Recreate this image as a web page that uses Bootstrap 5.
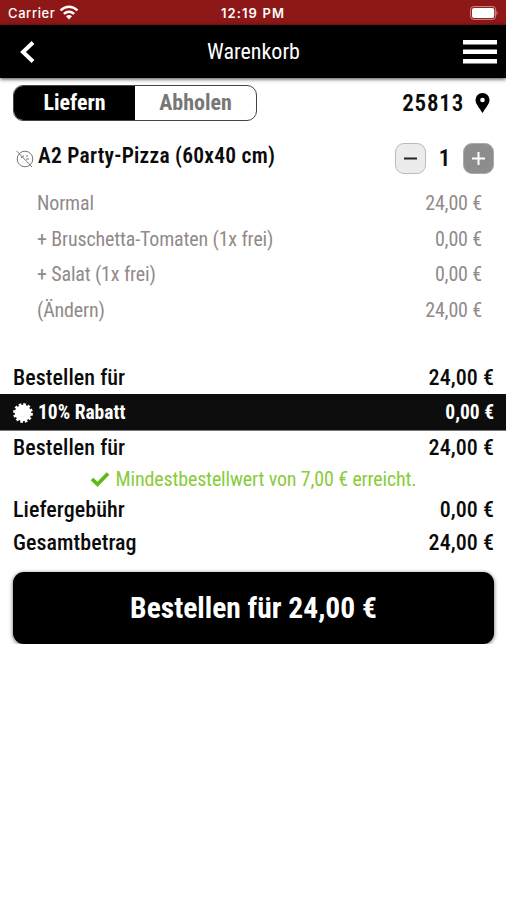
<!DOCTYPE html>
<html lang="de">
<head>
<meta charset="utf-8">
<meta name="viewport" content="width=device-width, initial-scale=1">
<title>Warenkorb</title>
<link href="https://cdn.jsdelivr.net/npm/bootstrap@5.3.0/dist/css/bootstrap.min.css" rel="stylesheet">
<style>
body{font-family:"Roboto Condensed",Roboto,sans-serif;font-stretch:75%;color:#0b0b0b;line-height:1}
svg{display:block;flex:none}
.status{height:25px;background:#8e1818;font:500 13px Inter,sans-serif;letter-spacing:.6px}
.status>*{flex:1}
.clock{font-weight:600;letter-spacing:1.1px}
.topbar{height:53px;box-shadow:0 1px 4px rgba(0,0,0,.75);font-size:22px;padding:0 9px 0 20px}
.page-title{position:relative;left:-4px}
.choice{padding:7px 15px 0 13px}
.modes{width:244px;height:36px;border:1px solid #444;border-radius:10px;font-size:22px;font-weight:700}
.pickup{color:#777}
.place{font-size:23px;font-weight:600;letter-spacing:.8px;gap:10px}
.product{height:75px;padding:0 12px 0 15px}
.dish{font-size:21.5px;font-weight:600;letter-spacing:.25px;gap:4px}
.dish span{margin-bottom:5px}
.count{width:37px;font-size:23px;font-weight:600}
.step{width:31px;height:31px;border-radius:9px;border:1px solid #bbb;background:#ececec}
.step.more{background:#8d8d8d;border-color:#aaa}
.extras{font-size:20px;font-weight:400;color:#918a8a;letter-spacing:-.15px;padding:0 24px 0 37px;margin-top:-3px;height:168px}
.extras>div{height:35.5px}
.sum{font-size:22px;font-weight:500;letter-spacing:.06px;padding:0 12px 0 13px;height:33px}
.promo{height:37px;background:#0d0d0d;border-bottom:1px solid #777;font-size:19.5px;font-weight:700;padding:1px 12px 0 13px}
.reached{height:29px;font-size:20px;font-weight:400;color:#8acb3c;letter-spacing:-.15px;gap:6px}
.order{height:72px;margin:13px 12px 0 13px;padding-top:1px;border-radius:11px;font-size:29.5px;font-weight:700;box-shadow:0 1px 4px rgba(0,0,0,.6)}
</style>
</head>
<body class="bg-white">
<div class="status d-flex align-items-center text-white px-2">
<div class="d-flex align-items-center gap-1"><span>Carrier</span><svg width="20" height="15" viewBox="0 0 20 15" fill="none" stroke="#fff" stroke-width="2.4"><path d="M1.500 5.300Q10-2 18.500 5.300M4.800 8.800q5.200-4.300 10.400 0"/><path d="M10 14.500l-3-3.300q3-2.200 6 0z" fill="#fff" stroke="none"/></svg></div>
<div class="clock text-center">12:19 PM</div>
<div class="d-flex justify-content-end"><svg width="30" height="14" viewBox="0 0 30 14"><rect x="2.600" y=".6" width="25" height="12.800" rx="3" fill="none" stroke="#d08d8d"/><rect x="4" y="2" width="22.200" height="10" rx="2" fill="#fff"/><path d="M28.500 4.500q2 2.500 0 5z" fill="#d08d8d"/></svg></div>
</div>
<nav class="topbar bg-black text-white d-flex align-items-center justify-content-between">
<svg width="32" height="24" viewBox="0 0 32 24" fill="none" stroke="#fff" stroke-width="4"><path d="M13 2.500 3 12l10 9.500"/></svg>
<span class="page-title">Warenkorb</span>
<svg width="34" height="24" viewBox="0 0 34 24" fill="#fff"><path d="M0 0h34v4.500H0zM0 9.500h34V14H0zM0 19h34v4.500H0z"/></svg>
</nav>
<main>
<section class="choice d-flex align-items-center justify-content-between">
<div class="modes d-flex overflow-hidden">
<div class="w-50 bg-black text-white d-flex align-items-center justify-content-center">Liefern</div>
<div class="pickup w-50 d-flex align-items-center justify-content-center">Abholen</div>
</div>
<div class="place d-flex align-items-center"><span>25813</span><svg width="17" height="20" viewBox="1 0 17 20"><path fill="#000" fill-rule="evenodd" d="M9.500 0a7 7 0 0 1 7 7.100C16.500 11 13 14.500 9.500 20 6 14.500 2.500 11 2.500 7.100A7 7 0 0 1 9.500 0zm0 4.700a2.300 2.300 0 1 0 0 4.600 2.300 2.300 0 0 0 0-4.600z"/></svg></div>
</section>
<section class="product d-flex align-items-center justify-content-between">
<div class="dish d-flex align-items-center"><svg width="19" height="18" viewBox="0 0 19 18" fill="none" stroke="#777"><circle cx="10" cy="9" r="7.800"/><path d="M1.500.8 17 17M6 8q1-2 3-2m2 3h3m-3-3h2"/></svg><span>A2 Party-Pizza (60x40 cm)</span></div>
<div class="d-flex align-items-center">
<div class="step d-flex align-items-center justify-content-center"><svg width="15" height="15"><path d="M1 7.500h13" stroke="#222" stroke-width="2"/></svg></div>
<span class="count text-center">1</span>
<div class="step more d-flex align-items-center justify-content-center"><svg width="15" height="15"><path d="M1 7.500h13M7.500 1v13" stroke="#fff" stroke-width="2"/></svg></div>
</div>
</section>
<section class="extras">
<div class="d-flex justify-content-between"><span>Normal</span><span>24,00 €</span></div>
<div class="d-flex justify-content-between"><span>+ Bruschetta-Tomaten (1x frei)</span><span>0,00 €</span></div>
<div class="d-flex justify-content-between"><span>+ Salat (1x frei)</span><span>0,00 €</span></div>
<div class="d-flex justify-content-between"><span>(Ändern)</span><span>24,00 €</span></div>
</section>
<section>
<div class="sum d-flex align-items-center justify-content-between"><span>Bestellen für</span><span>24,00 €</span></div>
<div class="promo text-white d-flex align-items-center justify-content-between">
<div class="d-flex align-items-center"><svg class="me-1" width="21" height="20" viewBox="0 0 21 20"><circle cx="10" cy="10" r="8.300" fill="#fff"/><circle cx="10" cy="10" r="8.600" fill="none" stroke="#fff" stroke-width="2.600" stroke-dasharray="2.600 1.903"/></svg><span>10% Rabatt</span></div>
<span>0,00 €</span>
</div>
<div class="sum d-flex align-items-center justify-content-between"><span>Bestellen für</span><span>24,00 €</span></div>
<div class="reached d-flex align-items-center justify-content-center"><svg width="20" height="16" viewBox="0 0 20 16"><path d="M2 8l5.500 5.300L18 2.500" fill="none" stroke="#62b81a" stroke-width="3.800"/></svg><span>Mindestbestellwert von 7,00 € erreicht.</span></div>
<div class="sum d-flex align-items-center justify-content-between"><span>Liefergebühr</span><span>0,00 €</span></div>
<div class="sum d-flex align-items-center justify-content-between"><span>Gesamtbetrag</span><span>24,00 €</span></div>
</section>
<div class="order bg-black text-white d-flex align-items-center justify-content-center" role="button">Bestellen für 24,00 €</div>
</main>
</body>
</html>
